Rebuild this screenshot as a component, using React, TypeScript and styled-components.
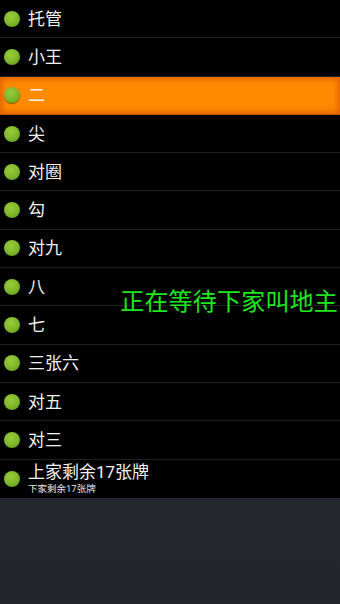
import React from 'react'
import styled, { createGlobalStyle } from 'styled-components'

const GlobalStyle = createGlobalStyle`
  html, body {
    margin: 0;
    padding: 0;
    background: #24272b;
  }
  body {
    font-family: "Roboto", "Noto Sans CJK SC", sans-serif;
  }
`

const Screen = styled.div`
  position: relative;
  width: 340px;
  height: 604px;
  overflow: hidden;
  display: flex;
  flex-direction: column;
  background: linear-gradient(180deg, #282b2f 0%, #222529 100%);
`

const List = styled.ul`
  list-style: none;
  margin: 0;
  padding: 0;
  background: #000;
`

const Row = styled.li<{ $active?: boolean }>`
  height: 38.3px;
  box-sizing: border-box;
  display: flex;
  align-items: center;
  gap: 8px;
  padding-left: 4px;
  border-bottom: 1px solid ${(p) => (p.$active ? '#c45400' : '#202020')};
  background: ${(p) => (p.$active ? '#ff8a00' : '#000')};
  box-shadow: ${(p) => (p.$active ? 'inset 0 0 6px 2px #e05e00' : 'none')};
  &:last-child {
    border-bottom: none;
  }
`

// green status dot
const Ball = styled.span`
  flex: none;
  width: 16px;
  height: 16px;
  border-radius: 50%;
  background: radial-gradient(circle at 42% 35%, #98cc3a 0%, #80b82c 50%, #558c18 100%);
  box-shadow: 0 1px 1px rgba(0, 0, 0, 0.45);
`

const Texts = styled.div`
  display: flex;
  flex-direction: column;
`

const Label = styled.span`
  color: #f2f2f2;
  font-size: 17px;
  line-height: 20px;
`

const SubLabel = styled.span`
  color: #e6e6e6;
  font-size: 9.5px;
  line-height: 12px;
  margin-top: 1px;
`

const Waiting = styled.div`
  position: absolute;
  right: 2px;
  top: 287px;
  color: #1ee81e;
  font-size: 24px;
  line-height: 30px;
  letter-spacing: 0.2px;
`

const items = ['托管', '小王', '二', '尖', '对圈', '勾', '对九', '八', '七', '三张六', '对五', '对三']

export default function App() {
  return (
    <Screen>
      <GlobalStyle />
      <List>
        {items.map((label, i) => (
          <Row key={label} $active={i === 2}>
            <Ball />
            <Label>{label}</Label>
          </Row>
        ))}
        <Row>
          <Ball />
          <Texts>
            <Label>上家剩余17张牌</Label>
            <SubLabel>下家剩余17张牌</SubLabel>
          </Texts>
        </Row>
      </List>
      <Waiting>正在等待下家叫地主</Waiting>
    </Screen>
  )
}
